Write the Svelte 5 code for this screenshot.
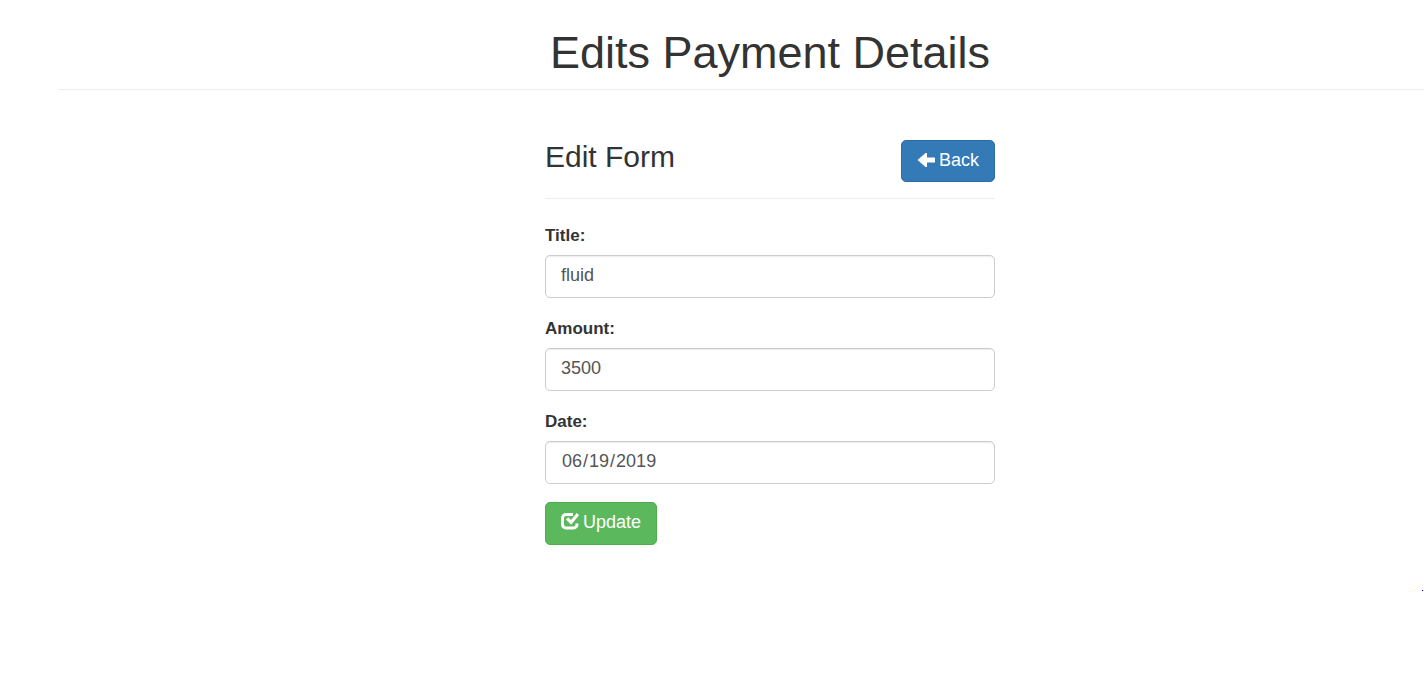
<script>
  let title = $state('fluid');
  let amount = $state('3500');
  let date = $state('2019-06-19');
</script>

<main>
  <header>
    <h1>Edits Payment Details</h1>
  </header>

  <section class="panel">
    <div class="panel-head">
      <h2>Edit Form</h2>
      <a class="btn primary" href="#back">
        <svg viewBox="0 0 18 16" aria-hidden="true"><path d="M0.500 8 8.500 1H10v4.500h7.500q.5 0 .5.500v4q0 .5-.5.500H10V15H8.500z" /></svg>
        <span>Back</span>
      </a>
    </div>

    <form onsubmit={(e) => e.preventDefault()}>
      <div class="field">
        <label for="title">Title:</label>
        <input id="title" type="text" bind:value={title} />
      </div>
      <div class="field">
        <label for="amount">Amount:</label>
        <input id="amount" type="text" bind:value={amount} />
      </div>
      <div class="field">
        <label for="date">Date:</label>
        <input id="date" type="date" bind:value={date} />
      </div>
      <button class="btn success" type="submit">
        <svg viewBox="0 0 18 18" aria-hidden="true">
          <path class="box" d="M12 2.500H5A3.500 3.500 0 0 0 1.500 6v6.500A3.500 3.500 0 0 0 5 16h7.500a3.500 3.500 0 0 0 3.500-3.500V11.500" />
          <path d="M5 7.500 7.200 5.300 10 8 15.800 1 18 3.200 10.200 12.800z" />
        </svg>
        <span>Update</span>
      </button>
    </form>
  </section>

  <i class="dot"></i>
</main>

<style>
  :global(body) {
    margin: 0;
    background: #fff;
    overflow-x: hidden;
  }

  main {
    position: relative;
    box-sizing: border-box;
    width: 100%;
    min-height: 100vh;
    margin-left: 58px;
    font-family: Arial, "Liberation Sans", sans-serif;
    font-size: 18px;
    line-height: 25px;
    color: #333;
  }

  header {
    padding: 28px 0 11px;
    border-bottom: 1px solid #eee;
    text-align: center;
  }

  h1,
  h2 {
    margin: 0;
    font-weight: 400;
  }

  h1 {
    font-size: 45px;
    line-height: 50px;
  }

  h2 {
    font-size: 30px;
    line-height: 34px;
  }

  .panel {
    max-width: 450px;
    margin: 50px auto 0;
  }

  .panel-head {
    display: flex;
    justify-content: space-between;
    align-items: flex-start;
    padding-bottom: 16px;
    border-bottom: 1px solid #eee;
    margin-bottom: 24px;
  }

  .btn {
    display: inline-flex;
    align-items: center;
    gap: 4px;
    box-sizing: border-box;
    height: 42px;
    padding: 0 15px 2px;
    border: 1px solid;
    border-radius: 5px;
    color: #fff;
    font: inherit;
    text-decoration: none;
    cursor: pointer;
  }

  .btn svg {
    width: 18px;
    fill: #fff;
  }

  .btn .box {
    fill: none;
    stroke: #fff;
    stroke-width: 3;
  }

  .primary {
    background: #337ab7;
    border-color: #2e6da4;
  }

  .success {
    height: 43px;
    background: #5cb85c;
    border-color: #4cae4c;
  }

  .success svg {
    margin-bottom: 4px;
  }

  .field {
    margin-bottom: 18px;
  }

  label {
    display: block;
    margin-bottom: 7px;
    font-size: 17px;
    font-weight: 700;
  }

  input {
    display: block;
    box-sizing: border-box;
    width: 100%;
    height: 43px;
    padding: 0 15px 2px;
    border: 1px solid #ccc;
    border-radius: 5px;
    background: #fff;
    box-shadow: inset 0 1px 1px rgba(0, 0, 0, 0.075);
    color: #555;
    font: inherit;
  }

  input::-webkit-calendar-picker-indicator {
    display: none;
  }

  .dot {
    position: absolute;
    right: 59px;
    top: 590px;
    width: 1px;
    height: 1px;
    background: #00f;
    box-shadow: 0 0 1px #00f;
  }
</style>
